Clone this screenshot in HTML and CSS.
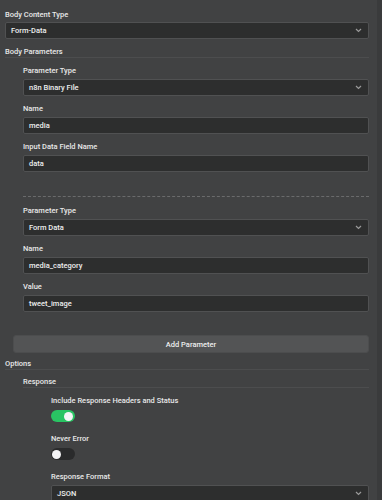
FILE: index.html
```html
<!DOCTYPE html>
<html>
<head>
  <title>HTTP Request Parameters</title>
  <link rel="stylesheet" href="styles.css">
</head>
<body>
  <div class="page">
    <div class="content">

      <div class="field top-field">
        <div class="label">Body Content Type</div>
        <div class="input select">Form-Data
          <svg class="chevron" width="7" height="5" viewBox="0 0 7 5"><path d="M1 1 L3.5 3.5 L6 1" fill="none" stroke="#9a9a9a" stroke-width="1.2"/></svg>
        </div>
      </div>

      <div class="section-title">Body Parameters</div>
      <div class="collection">
        <div class="param">
          <div class="field">
            <div class="label">Parameter Type</div>
            <div class="input select">n8n Binary File
              <svg class="chevron" width="7" height="5" viewBox="0 0 7 5"><path d="M1 1 L3.5 3.5 L6 1" fill="none" stroke="#9a9a9a" stroke-width="1.2"/></svg>
            </div>
          </div>
          <div class="field">
            <div class="label">Name</div>
            <div class="input">media</div>
          </div>
          <div class="field">
            <div class="label">Input Data Field Name</div>
            <div class="input">data</div>
          </div>
        </div>

        <div class="divider"></div>

        <div class="param">
          <div class="field">
            <div class="label">Parameter Type</div>
            <div class="input select">Form Data
              <svg class="chevron" width="7" height="5" viewBox="0 0 7 5"><path d="M1 1 L3.5 3.5 L6 1" fill="none" stroke="#9a9a9a" stroke-width="1.2"/></svg>
            </div>
          </div>
          <div class="field">
            <div class="label">Name</div>
            <div class="input">media_category</div>
          </div>
          <div class="field">
            <div class="label">Value</div>
            <div class="input">tweet_image</div>
          </div>
        </div>
      </div>

      <button class="add-btn">Add Parameter</button>

      <div class="section-title options">Options</div>
      <div class="nested">
        <div class="section-title">Response</div>
        <div class="nested-deep">
          <div class="toggle-field">
            <div class="label">Include Response Headers and Status</div>
            <div class="toggle on"><span class="knob"></span></div>
          </div>
          <div class="toggle-field">
            <div class="label">Never Error</div>
            <div class="toggle"><span class="knob"></span></div>
          </div>
          <div class="field">
            <div class="label">Response Format</div>
            <div class="input select">JSON
              <svg class="chevron" width="7" height="5" viewBox="0 0 7 5"><path d="M1 1 L3.5 3.5 L6 1" fill="none" stroke="#9a9a9a" stroke-width="1.2"/></svg>
            </div>
          </div>
        </div>
      </div>

    </div>
    <div class="scrollbar"></div>
  </div>
</body>
</html>
```

FILE: styles.css
```css
body {
  margin: 0;
  font-family: Roboto, "Liberation Sans", Arial, sans-serif;
  background-color: #414243;
  color: #e6e6e6;
  height: 500px;
  overflow: hidden;
}

.page {
  display: flex;
  height: 500px;
}

.content {
  flex: 1;
  padding: 10px 8px 0 5px;
}

.scrollbar {
  width: 5px;
  background-color: #3a3b3c;
}

.label {
  font-size: 7.5px;
  font-weight: 500;
  line-height: 10px;
  color: #e8e8e8;
  margin-bottom: 3px;
}

.top-field .label {
  margin-bottom: 2px;
}

.field {
  margin-bottom: 8px;
}

.input {
  position: relative;
  height: 17px;
  box-sizing: border-box;
  padding: 0 5px;
  border: 1px solid #505152;
  border-radius: 2px;
  background-color: #2d2e2e;
  font-size: 7.5px;
  font-weight: 500;
  line-height: 15px;
  color: #eeeeee;
}

.chevron {
  position: absolute;
  right: 6px;
  top: 5px;
}

.section-title {
  font-size: 7.5px;
  font-weight: 500;
  line-height: 10px;
  color: #e8e8e8;
  border-bottom: 1px solid #4c4d4e;
  margin-bottom: 8px;
}

.collection {
  padding-left: 18px;
}

.divider {
  border-top: 1px dashed #6a6b6c;
  margin: 24px 0 9px 0;
}

.add-btn {
  display: block;
  width: calc(100% - 8px);
  margin: 23px 0 6px 8px;
  height: 18px;
  padding: 0;
  border: 1px solid #4c4d4e;
  border-radius: 3px;
  background-color: #535455;
  color: #eeeeee;
  font-family: Roboto, "Liberation Sans", Arial, sans-serif;
  font-size: 7.5px;
  font-weight: 500;
}

.options {
  margin-bottom: 7px;
}

.nested {
  padding-left: 18px;
}

.nested-deep {
  padding-left: 28px;
}

.toggle-field {
  margin-bottom: 12px;
}

.toggle-field .label {
  margin-bottom: 4px;
}

.toggle {
  position: relative;
  width: 24px;
  height: 12px;
  border-radius: 6px;
  background-color: #2a2b2c;
}

.toggle.on {
  background-color: #29c463;
}

.knob {
  position: absolute;
  top: 1.5px;
  left: 1px;
  width: 9px;
  height: 9px;
  border-radius: 50%;
  background-color: #f4f4f6;
}

.toggle.on .knob {
  left: auto;
  right: 2px;
}
```
